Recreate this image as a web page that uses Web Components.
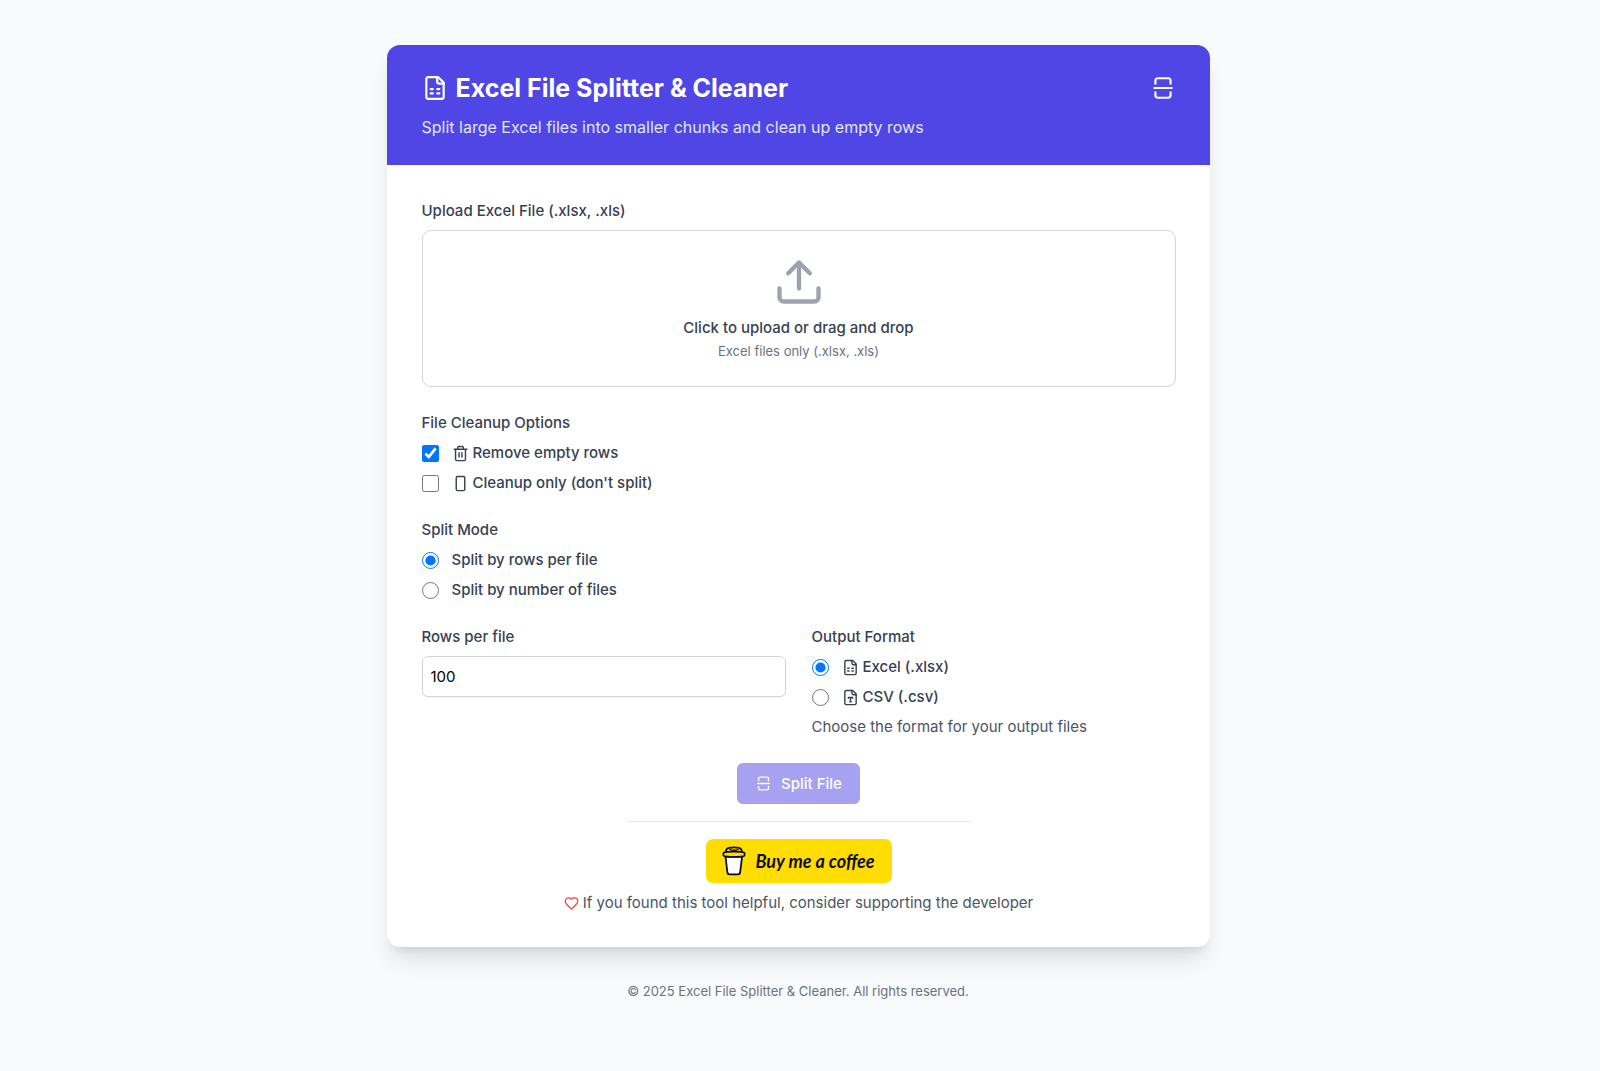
<!DOCTYPE html>
<html lang="en">
<head>
<meta charset="utf-8">
<meta name="viewport" content="width=device-width, initial-scale=1">
<title>Excel File Splitter &amp; Cleaner</title>
<style>
  body {
    margin: 0;
    background: #f9fafb;
    color: #374151;
    font: 500 15px/22px Inter, "Liberation Sans", sans-serif;
  }
</style>
</head>
<body>
<splitter-app></splitter-app>

<script>
(function () {
  const ICONS = {
    spreadsheet: `
      <path d="M15 2H6a2 2 0 0 0-2 2v16a2 2 0 0 0 2 2h12a2 2 0 0 0 2-2V7Z"/>
      <path d="M14 2v4a2 2 0 0 0 2 2h4M8 13h2M14 13h2M8 17h2M14 17h2"/>`,
    filetype: `
      <path d="M15 2H6a2 2 0 0 0-2 2v16a2 2 0 0 0 2 2h12a2 2 0 0 0 2-2V7Z"/>
      <path d="M14 2v4a2 2 0 0 0 2 2h4M9 13v-1h6v1M12 12v6M11 18h2"/>`,
    split: `
      <path d="M5 8V5c0-1 1-2 2-2h10c1 0 2 1 2 2v3"/>
      <path d="M19 16v3c0 1-1 2-2 2H7c-1 0-2-1-2-2v-3M4 12h16"/>`,
    upload: `
      <path d="M21 15v4a2 2 0 0 1-2 2H5a2 2 0 0 1-2-2v-4"/>
      <path d="M17 8l-5-5-5 5M12 3v12"/>`,
    trash: `
      <path d="M3 6h18M19 6v14c0 1-1 2-2 2H7c-1 0-2-1-2-2V6"/>
      <path d="M8 6V4c0-1 1-2 2-2h4c1 0 2 1 2 2v2M10 11v6M14 11v6"/>`,
    rectangle: `<rect x="6" y="2" width="12" height="20" rx="2"/>`,
    heart: `
      <path d="M19 14c1.5-1.5 3-3.2 3-5.5A5.5 5.5 0 0 0 16.5 3c-1.8 0-3 .5-4.500 2-1.500-1.500-2.700-2-4.500-2A5.500 5.500 0 0 0 2 8.500c0 2.300 1.500 4 3 5.500l7 7Z"/>`,
  };

  class BaseElement extends HTMLElement {
    constructor() {
      super();
      this.attachShadow({ mode: "open" });
    }

    connectedCallback() {
      this.shadowRoot.innerHTML = this.render();
    }
  }

  class AppIcon extends BaseElement {
    render() {
      return `
        <style>
        :host {
          display: block;
          flex: none;
          width: 17px;
          height: 17px;
        }
        svg {
          display: block;
          width: 100%;
          height: 100%;
          fill: none;
          stroke: currentColor;
          stroke-width: 2;
          stroke-linecap: round;
          stroke-linejoin: round;
        }
        </style>
        <svg viewBox="0 0 24 24" aria-hidden="true">${ICONS[this.getAttribute("name")]}</svg>
      `;
    }
  }

  class AppHeader extends BaseElement {
    render() {
      return `
        <style>
        :host {
          display: block;
          padding: 26px 34px 25px 35px;
          background: #4f46e5;
          color: #fff;
        }
        .bar {
          display: flex;
          align-items: center;
          gap: 8px;
          margin-bottom: 9px;
        }
        app-icon {
          width: 26px;
          height: 26px;
        }
        h1 {
          flex: 1;
          margin: 0;
          font-size: 25px;
          line-height: 34px;
          font-weight: 700;
        }
        p {
          margin: 0;
          color: #e0e7ff;
          font-size: 16px;
          line-height: 26px;
          font-weight: 400;
        }
        </style>
        <div class="bar">
          <app-icon name="spreadsheet"></app-icon>
          <h1><slot></slot></h1>
          <app-icon name="split"></app-icon>
        </div>
        <p><slot name="subtitle"></slot></p>
      `;
    }
  }

  class FileDropzone extends BaseElement {
    render() {
      return `
        <style>
        :host {
          display: block;
        }
        .title {
          display: block;
          margin-bottom: 8px;
        }
        .zone {
          display: flex;
          flex-direction: column;
          align-items: center;
          position: relative;
          padding: 25px;
          border: 1px solid #d1d5db;
          border-radius: 9px;
          cursor: pointer;
        }
        app-icon {
          width: 52px;
          height: 52px;
          margin-bottom: 9px;
          color: #9ca3af;
        }
        small {
          margin-top: 2px;
          color: #6b7280;
          font-size: 13px;
          line-height: 20px;
          font-weight: 400;
        }
        /* sits over the whole zone, so that a click or a drop lands on it */
        input {
          position: absolute;
          inset: 0;
          width: 100%;
          opacity: 0;
          cursor: pointer;
        }
        </style>
        <label class="title" for="file">Upload Excel File (.xlsx, .xls)</label>
        <div class="zone">
          <app-icon name="upload"></app-icon>
          <span>Click to upload or drag and drop</span>
          <small>Excel files only (.xlsx, .xls)</small>
          <input id="file" type="file" accept=".xlsx,.xls">
        </div>
      `;
    }
  }

  class ChoiceItem extends BaseElement {
    render() {
      const icon = this.getAttribute("icon");
      return `
        <style>
        :host {
          display: flex;
          align-items: center;
          gap: 13px;
        }
        input {
          flex: none;
          width: 17px;
          height: 17px;
          margin: 0;
        }
        label {
          display: flex;
          align-items: center;
          gap: 4px;
        }
        </style>
        <input id="input" type="${this.getAttribute("type")}" ${this.hasAttribute("checked") ? "checked" : ""}>
        <label for="input">${icon ? `<app-icon name="${icon}"></app-icon>` : ""}<slot></slot></label>
      `;
    }

    get input() {
      return this.shadowRoot.getElementById("input");
    }
  }

  class ChoiceGroup extends BaseElement {
    connectedCallback() {
      super.connectedCallback();
      this.addEventListener("click", this._click.bind(this));
    }

    // radios in separate shadow roots do not share a group
    _click(e) {
      const item = e.target.closest("choice-item[type=radio]");
      if (!item || !item.input.checked) return;
      this.querySelectorAll("choice-item").forEach((other) => {
        if (other !== item) other.input.checked = false;
      });
    }

    render() {
      return `
        <style>
        :host {
          display: block;
        }
        fieldset {
          min-width: 0;
          margin: 0;
          padding: 0;
          border: 0;
        }
        legend {
          padding: 0;
          margin-bottom: 8px;
        }
        .items {
          display: flex;
          flex-direction: column;
          gap: 8px;
        }
        ::slotted(p) {
          margin: 0;
          color: #4b5563;
          font-weight: 400;
        }
        </style>
        <fieldset>
          <legend>${this.getAttribute("label")}</legend>
          <div class="items"><slot></slot></div>
        </fieldset>
      `;
    }
  }

  class NumberField extends BaseElement {
    render() {
      return `
        <style>
        :host {
          display: block;
        }
        label {
          display: block;
          margin-bottom: 8px;
        }
        input {
          display: block;
          box-sizing: border-box;
          width: 100%;
          height: 41px;
          padding: 8px;
          border: 1px solid #d1d5db;
          border-radius: 6px;
          background: #fff;
          box-shadow: 0 1px 2px rgba(0, 0, 0, 0.05);
          color: #000;
          font: inherit;
          font-weight: 400;
        }
        </style>
        <label for="number"><slot></slot></label>
        <input id="number" type="number" min="1" value="${this.getAttribute("value")}">
      `;
    }
  }

  class SplitButton extends BaseElement {
    render() {
      return `
        <style>
        :host {
          display: block;
        }
        button {
          display: flex;
          align-items: center;
          gap: 9px;
          height: 41px;
          padding: 0 18px;
          border: 0;
          border-radius: 6px;
          background: #4f46e5;
          color: #fff;
          font: inherit;
        }
        button:disabled {
          opacity: 0.5;
        }
        </style>
        <button type="button" disabled><app-icon name="split"></app-icon><slot></slot></button>
      `;
    }
  }

  class CoffeeLink extends BaseElement {
    render() {
      return `
        <style>
        :host {
          display: block;
        }
        a {
          display: flex;
          align-items: center;
          justify-content: center;
          gap: 9px;
          box-sizing: border-box;
          width: 186px;
          height: 44px;
          border-radius: 7px;
          background: #ffdd00;
          color: #0d0c22;
          font: italic 700 18px/22px Lato, cursive;
          text-decoration: none;
        }
        svg {
          width: 24px;
          height: 30px;
        }
        </style>
        <a href="#coffee">
          <svg viewBox="0 0 24 30" fill="none" stroke="#0d0c22" stroke-width="1.8" stroke-linejoin="round" stroke-linecap="round" aria-hidden="true">
            <path d="M3.500 10.500l1.900 16c.2 1.300.8 1.900 2 1.900h8.700c1.200 0 1.800-.6 2-1.900l2-16Z" fill="#fff"/>
            <path d="M2 6.500c2-1.300 18-1.300 20 0 .9.600.9 2.900 0 3.500-2 1.100-18 1.100-20 0-.9-.6-.9-2.900 0-3.500Z" fill="#ffdd00"/>
            <path d="M3.800 5.500C4.200 3 5 2.100 7 1.900c3-.5 7.500-.5 10 0 1.700.3 2.400 1.300 3 3.500"/>
            <path d="M8 3.600c2 .7 6 .7 8 0" stroke-width="1.500"/>
          </svg>
          <slot></slot>
        </a>
      `;
    }
  }

  class SupportNote extends BaseElement {
    render() {
      return `
        <style>
        :host {
          display: flex;
          flex-direction: column;
          align-items: center;
        }
        hr {
          width: 344px;
          max-width: 100%;
          margin: 0 0 17px;
          border: 0;
          border-top: 1px solid #e5e7eb;
        }
        p {
          display: flex;
          align-items: center;
          gap: 4px;
          margin: 9px 0 0;
          color: #4b5563;
          font-weight: 400;
        }
        app-icon {
          width: 15px;
          height: 15px;
          color: #ef4444;
        }
        </style>
        <hr>
        <coffee-link>Buy me a coffee</coffee-link>
        <p><app-icon name="heart"></app-icon><slot></slot></p>
      `;
    }
  }

  class SplitterApp extends BaseElement {
    render() {
      return `
        <style>
        :host {
          display: block;
          padding: 45px 20px 45px 16px;
        }
        main {
          max-width: 823px;
          margin: 0 auto;
          overflow: hidden;
          border-radius: 13px;
          background: #fff;
          box-shadow: 0 17px 21px -4px rgba(0, 0, 0, 0.1), 0 7px 9px -5px rgba(0, 0, 0, 0.1);
        }
        form {
          display: flex;
          flex-direction: column;
          gap: 25px;
          padding: 35px 34px 33px 35px;
        }
        .columns {
          display: grid;
          grid-template-columns: repeat(auto-fit, minmax(280px, 1fr));
          gap: 26px;
        }
        .actions {
          display: flex;
          flex-direction: column;
          align-items: center;
          gap: 17px;
        }
        footer {
          margin-top: 34px;
          color: #6b7280;
          font-size: 13px;
          line-height: 20px;
          font-weight: 400;
          text-align: center;
        }
        </style>
        <main>
          <app-header>
            Excel File Splitter &amp; Cleaner
            <span slot="subtitle">Split large Excel files into smaller chunks and clean up empty rows</span>
          </app-header>
          <form>
            <file-dropzone></file-dropzone>
            <choice-group label="File Cleanup Options">
              <choice-item type="checkbox" icon="trash" checked>Remove empty rows</choice-item>
              <choice-item type="checkbox" icon="rectangle">Cleanup only (don't split)</choice-item>
            </choice-group>
            <choice-group label="Split Mode">
              <choice-item type="radio" checked>Split by rows per file</choice-item>
              <choice-item type="radio">Split by number of files</choice-item>
            </choice-group>
            <div class="columns">
              <number-field value="100">Rows per file</number-field>
              <choice-group label="Output Format">
                <choice-item type="radio" icon="spreadsheet" checked>Excel (.xlsx)</choice-item>
                <choice-item type="radio" icon="filetype">CSV (.csv)</choice-item>
                <p>Choose the format for your output files</p>
              </choice-group>
            </div>
            <div class="actions">
              <split-button>Split File</split-button>
              <support-note>If you found this tool helpful, consider supporting the developer</support-note>
            </div>
          </form>
        </main>
        <footer>© 2025 Excel File Splitter &amp; Cleaner. All rights reserved.</footer>
      `;
    }
  }

  customElements.define("app-icon", AppIcon);
  customElements.define("app-header", AppHeader);
  customElements.define("file-dropzone", FileDropzone);
  customElements.define("choice-item", ChoiceItem);
  customElements.define("choice-group", ChoiceGroup);
  customElements.define("number-field", NumberField);
  customElements.define("split-button", SplitButton);
  customElements.define("coffee-link", CoffeeLink);
  customElements.define("support-note", SupportNote);
  customElements.define("splitter-app", SplitterApp);
})();
</script>
</body>
</html>
